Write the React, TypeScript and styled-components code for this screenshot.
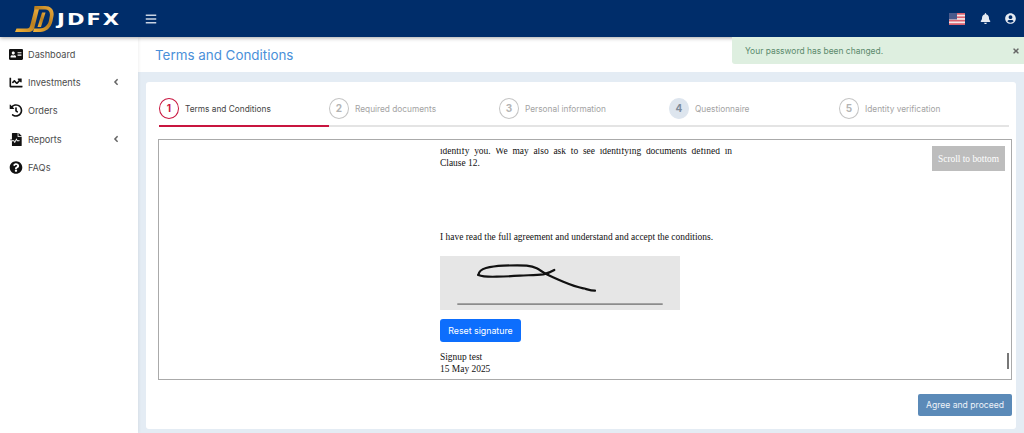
import React from "react";
import styled, { createGlobalStyle } from "styled-components";
import {
  FaAddressCard,
  FaAngleLeft,
  FaBars,
  FaBell,
  FaChartLine,
  FaFileMedicalAlt,
  FaHistory,
  FaQuestionCircle,
  FaTimes,
  FaUserCircle,
} from "react-icons/fa";

const GlobalStyle = createGlobalStyle`
  html, body {
    margin: 0;
    padding: 0;
    height: 433px;
    overflow: hidden;
    background: #e4ecf4;
    font-family: "Inter", "Noto Sans", sans-serif;
  }
  * { box-sizing: border-box; }
`;

const Page = styled.div`
  position: relative;
  width: 1024px;
  height: 433px;
  display: flex;
  flex-direction: column;
  overflow: hidden;
`;

const Topbar = styled.header`
  position: relative;
  z-index: 3;
  flex: 0 0 37px;
  display: flex;
  align-items: center;
  background: #002d6a;
  box-shadow: 0 1px 4px rgba(0, 0, 0, 0.35);
  padding-left: 15px;
  padding-right: 8px;
`;

const LogoMark = styled.svg`
  width: 39px;
  height: 26px;
  flex: none;
  margin-top: 1px;
`;

const LogoSlot = styled.span`
  margin-left: 3px;
  width: 88px;
  flex: none;
`;

const LogoText = styled.span`
  display: inline-block;
  color: #fff;
  font-family: "DejaVu Sans", sans-serif;
  font-weight: 700;
  font-size: 15.5px;
  letter-spacing: 1.5px;
  transform: scaleX(1.36);
  transform-origin: left center;
`;

const MenuButton = styled.span`
  display: flex;
  color: #c9d3e2;
  font-size: 12px;
`;

const TopRight = styled.div`
  margin-left: auto;
  display: flex;
  align-items: center;
  gap: 14px;
  color: #e6ebf2;
  font-size: 11px;
`;

const Flag = styled.svg`
  width: 16px;
  height: 12px;
  margin-right: 1px;
`;

const Body = styled.div`
  flex: 1;
  display: flex;
  min-height: 0;
`;

const Sidebar = styled.nav`
  position: relative;
  z-index: 2;
  flex: 0 0 138px;
  background: #fff;
  padding-top: 3px;
  box-shadow: 1px 0 3px rgba(0, 0, 0, 0.06);
`;

const NavItem = styled.a`
  height: 28.3px;
  display: flex;
  align-items: center;
  padding: 0 17px 0 9px;
  color: #4c4c4c;
  font-size: 9.2px;
  svg:first-child {
    width: 14px;
    height: 13px;
    margin-right: 5px;
    color: #111;
  }
`;

const Caret = styled(FaAngleLeft)`
  margin-left: auto;
  width: 10px;
  height: 10px;
  color: #666;
`;

const Main = styled.main`
  flex: 1;
  min-width: 0;
  display: flex;
  flex-direction: column;
`;

const TitleBar = styled.div`
  flex: 0 0 35px;
  background: #fff;
  padding: 0 17px;
  display: flex;
  align-items: center;
  color: #4a90d9;
  font-size: 13.4px;
`;

const Card = styled.section`
  margin: 10px 8px 4px 8px;
  flex: 1;
  background: #fff;
  border-radius: 3px;
  padding: 16px 4px 0 12px;
  display: flex;
  flex-direction: column;
  min-height: 0;
`;

const Steps = styled.div`
  display: grid;
  grid-template-columns: repeat(5, 170px);
  margin-left: 1px;
  width: 851px;
  height: 29px;
`;

const Step = styled.div<{ $active?: boolean }>`
  display: flex;
  align-items: flex-start;
  gap: 6px;
  height: 29px;
  border-bottom: 2px solid ${(p) => (p.$active ? "#c8153f" : "#e4e4e4")};
  color: ${(p) => (p.$active ? "#444" : "#a3a3a3")};
  font-size: 8.3px;
  line-height: 23px;
`;

const StepNum = styled.span<{ $active?: boolean; $filled?: boolean }>`
  width: 20px;
  height: 21px;
  border-radius: 50%;
  display: flex;
  align-items: center;
  justify-content: center;
  font-weight: 700;
  font-size: 10px;
  border: 1.5px solid ${(p) => (p.$active ? "#c8153f" : p.$filled ? "#dde5ee" : "#c4c4c4")};
  background: ${(p) => (p.$filled ? "#dde5ee" : "transparent")};
  color: ${(p) => (p.$active ? "#c8153f" : p.$filled ? "#7d8b9a" : "#b4b4b4")};
`;

const Frame = styled.div`
  position: relative;
  margin-top: 12px;
  width: 854px;
  height: 241px;
  border: 1px solid #aaa;
  overflow: hidden;
  padding-top: 8px;
  font-family: "Liberation Serif", serif;
  font-size: 9.45px;
  color: #111;
`;

const Clip = styled.div`
  height: 232px;
  overflow: hidden;
`;

const Doc = styled.div`
  width: 292px;
  margin-left: 281px;
  margin-top: -3px;
  line-height: 12px;
`;

const Clause = styled.p`
  margin: 0;
  text-align: justify;
  text-align-last: justify;
`;

const Plain = styled.p<{ $top?: number }>`
  margin: ${(p) => p.$top ?? 0}px 0 0;
  white-space: nowrap;
`;

const SigPad = styled.svg`
  display: block;
  margin-top: 13px;
  width: 240px;
  height: 54px;
  background: #e6e6e6;
`;

const ResetButton = styled.button`
  display: block;
  margin-top: 9px;
  width: 81px;
  height: 23px;
  border: 0;
  border-radius: 3px;
  background: #0d6efd;
  color: #fff;
  font-family: "Inter", sans-serif;
  font-size: 8.8px;
  padding: 0;
`;

const ScrollButton = styled.div`
  position: absolute;
  top: 6px;
  right: 6px;
  width: 73px;
  height: 25px;
  background: #bdbdbd;
  color: #fff;
  display: flex;
  align-items: center;
  justify-content: center;
  font-size: 9.4px;
`;

const ScrollThumb = styled.div`
  position: absolute;
  right: 2px;
  bottom: 10px;
  width: 2px;
  height: 16px;
  background: #777;
`;

const Footer = styled.div`
  display: flex;
  justify-content: flex-end;
  width: 854px;
  margin-top: 14px;
`;

const AgreeButton = styled.button`
  width: 94px;
  height: 22px;
  border: 0;
  border-radius: 2px;
  background: #5b8ab8;
  color: #eef3f8;
  font-family: "Inter", sans-serif;
  font-size: 8.6px;
  padding: 0;
`;

const Toast = styled.div`
  position: absolute;
  z-index: 4;
  top: 37px;
  left: 732px;
  right: 0;
  height: 27px;
  display: flex;
  align-items: center;
  justify-content: space-between;
  padding: 0 4px 0 13px;
  background: #deefe0;
  border-radius: 0 0 0 3px;
  color: #5b8a6c;
  font-size: 8.45px;
  svg { color: #666; width: 8px; height: 8px; }
`;

const steps = [
  "Terms and Conditions",
  "Required documents",
  "Personal information",
  "Questionnaire",
  "Identity verification",
];

const navItems = [
  { label: "Dashboard", icon: <FaAddressCard /> },
  { label: "Investments", icon: <FaChartLine />, caret: true },
  { label: "Orders", icon: <FaHistory /> },
  { label: "Reports", icon: <FaFileMedicalAlt />, caret: true },
  { label: "FAQs", icon: <FaQuestionCircle /> },
];

export default function App() {
  return (
    <Page>
      <GlobalStyle />
      <Topbar>
        <LogoMark viewBox="0 0 39 26">
          <defs>
            <linearGradient id="gold" x1="0" y1="1" x2="1" y2="0">
              <stop offset="0" stopColor="#f5b53a" />
              <stop offset="0.55" stopColor="#b97f1f" />
              <stop offset="1" stopColor="#f0b040" />
            </linearGradient>
          </defs>
          <path
            d="M0 26L1.5 22.5H12C14 22.5 14.7 21.5 15.2 19.5L19.5 3H24L19.5 21C18.8 24.5 17 26 13 26Z"
            fill="url(#gold)"
          />
          <path
            d="M19.5 0H30C36 0 39.5 4 38.5 10L37.5 15C36 22 31 26 25 26H18L19 22.5H24.5C29.5 22.5 33 19 34 14.5L34.8 10C35.5 6 33.5 3.5 30 3.5H19Z"
            fill="url(#gold)"
          />
          <path d="M27 6.5H30.5L26 21H22.5Z" fill="url(#gold)" />
        </LogoMark>
        <LogoSlot>
          <LogoText>JDFX</LogoText>
        </LogoSlot>
        <MenuButton>
          <FaBars />
        </MenuButton>
        <TopRight>
          <Flag viewBox="0 0 16 12">
            <rect width="16" height="12" fill="#f3e9ea" />
            <rect y="0" width="16" height="1.7" fill="#d9616f" />
            <rect y="3.4" width="16" height="1.7" fill="#d9616f" />
            <rect y="6.8" width="16" height="1.7" fill="#d9616f" />
            <rect y="10.2" width="16" height="1.8" fill="#d9616f" />
            <rect width="8" height="6.4" fill="#4a5a8c" />
          </Flag>
          <FaBell />
          <FaUserCircle />
        </TopRight>
      </Topbar>
      <Toast>
        Your password has been changed.
        <FaTimes />
      </Toast>
      <Body>
        <Sidebar>
          {navItems.map((n) => (
            <NavItem key={n.label}>
              {n.icon}
              {n.label}
              {n.caret && <Caret />}
            </NavItem>
          ))}
        </Sidebar>
        <Main>
          <TitleBar>Terms and Conditions</TitleBar>
          <Card>
            <Steps>
              {steps.map((s, i) => (
                <Step key={s} $active={i === 0}>
                  <StepNum $active={i === 0} $filled={i === 3}>
                    {i + 1}
                  </StepNum>
                  {s}
                </Step>
              ))}
            </Steps>
            <Frame>
              <Clip>
                <Doc>
                  <Clause>identify you. We may also ask to see identifying documents defined in</Clause>
                  <Plain>Clause 12.</Plain>
                  <Plain $top={62}>I have read the full agreement and understand and accept the conditions.</Plain>
                  <SigPad viewBox="0 0 240 54">
                    <path
                      d="M38.3 19C39 15 42 13 46 12C52 10.5 58 10 63.3 9.7C72 9.3 80 9 86.7 9.7C91 10.2 94 11 96.7 12.3C100 14 103 16.5 106.7 18.3C112 21 118 23.5 123.3 25.7C130 28.5 137 31 143.3 32.3C147 33.2 151 34.8 155 34.7"
                      fill="none"
                      stroke="#111"
                      strokeWidth="2.2"
                      strokeLinecap="round"
                    />
                    <path
                      d="M38.3 19C42 20.5 50 20.9 56.7 20.7C65 20.5 72 20.2 80 19.7C88 19.2 96 19 103.3 18.3C107 17.5 111 16 114.3 14"
                      fill="none"
                      stroke="#111"
                      strokeWidth="2.2"
                      strokeLinecap="round"
                    />
                    <rect x="17.3" y="47.4" width="205.4" height="1.4" fill="#777" />
                  </SigPad>
                  <ResetButton>Reset signature</ResetButton>
                  <Plain $top={9}>Signup test</Plain>
                  <Plain>15 May 2025</Plain>
                </Doc>
              </Clip>
              <ScrollButton>Scroll to bottom</ScrollButton>
              <ScrollThumb />
            </Frame>
            <Footer>
              <AgreeButton>Agree and proceed</AgreeButton>
            </Footer>
          </Card>
        </Main>
      </Body>
    </Page>
  );
}
